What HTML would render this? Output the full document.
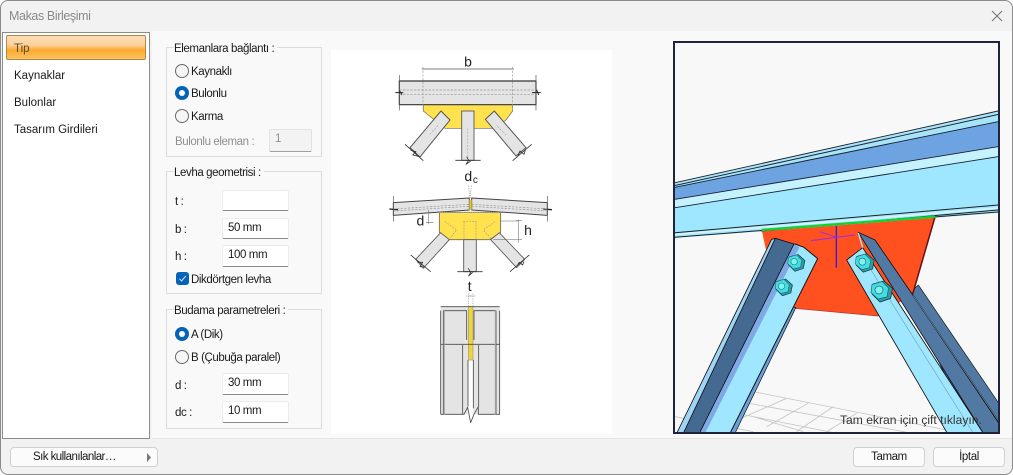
<!DOCTYPE html>
<html><head><meta charset="utf-8">
<style>
html,body{margin:0;padding:0;width:1013px;height:475px;overflow:hidden;background:#fff}
body{font-family:"Liberation Sans",sans-serif;font-size:11.5px;letter-spacing:-.4px;color:#1a1a1a;position:relative}
.a{position:absolute;white-space:nowrap}
.win{position:absolute;left:0;top:0;width:1011px;height:473px;border:1px solid #8a8a8a;border-radius:8px;background:#f2f2f2}
.panel{position:absolute;left:152px;top:31px;width:860px;height:407px;background:#f9f9f9;border-bottom:1px solid #e6e6e6}
.list{position:absolute;left:2px;top:32px;width:146px;height:405px;background:#fff;border:1px solid #8c8c8c}
.sel{position:absolute;left:6px;top:35px;width:138px;height:23px;border:1px solid #b08a45;border-radius:2px;background:linear-gradient(#fde0b8 0%,#fcd09a 40%,#fba92e 62%,#fcc465 100%)}
.g{position:absolute;border:1px solid #dcdcdc;box-sizing:border-box;left:166px;width:156px}
.lg{position:absolute;left:174px;background:#f9f9f9;padding-right:3px;line-height:14px;white-space:nowrap;margin-top:1px}
.r{position:absolute;left:175px;width:14px;height:14px;box-sizing:border-box;border:1px solid #6a6a6a;border-radius:50%;background:#f6f6f6}
.r.on{border:0;background:#0563b8}
.r.on:after{content:"";position:absolute;left:4px;top:4px;width:6px;height:6px;border-radius:50%;background:#fff}
.i{position:absolute;left:222px;width:67px;height:21px;background:#fff;border:1px solid #ececec;border-bottom:1px solid #8a8a8a;box-sizing:border-box;border-radius:2px;padding-left:5px;line-height:18px}
.b{position:absolute;top:447px;height:20px;box-sizing:border-box;background:#fbfbfb;border:1px solid #d0d0d0;border-radius:4px;text-align:center;line-height:19px}
.t{position:absolute;white-space:nowrap;line-height:14px;margin-top:1px}
.li{letter-spacing:0}
</style></head><body>
<div class="win"></div>
<div class="panel"></div>
<div class="a" style="left:9px;top:9px;font-size:12.5px;line-height:15px;color:#8a8a8a">Makas Birleşimi</div>
<svg class="a" style="left:990px;top:9px" width="14" height="14"><path d="M2 2L12 12M12 2L2 12" stroke="#777" stroke-width="1.1"/></svg>

<div class="list"></div><div class="sel"></div>
<div class="t li" style="left:14px;top:41px;color:#5a4a2a">Tip</div>
<div class="t li" style="left:14px;top:68px">Kaynaklar</div>
<div class="t li" style="left:14px;top:95px">Bulonlar</div>
<div class="t li" style="left:14px;top:122px">Tasarım Girdileri</div>

<div class="g" style="top:47px;height:110px"></div>
<div class="lg" style="top:41px">Elemanlara bağlantı :</div>
<div class="r" style="top:64px"></div><div class="t" style="left:191px;top:64px">Kaynaklı</div>
<div class="r on" style="top:86px"></div><div class="t" style="left:191px;top:86px">Bulonlu</div>
<div class="r" style="top:109px"></div><div class="t" style="left:191px;top:109px">Karma</div>
<div class="t" style="left:175px;top:134px;color:#8f8f8f">Bulonlu eleman :</div>
<div class="i" style="left:269px;top:129px;width:43px;height:23px;background:#f3f3f3;color:#8f8f8f;border-color:#e2e2e2;border-bottom-color:#a0a0a0">1</div>

<div class="g" style="top:171px;height:123px"></div>
<div class="lg" style="top:165px">Levha geometrisi :</div>
<div class="t" style="left:175px;top:194px">t :</div><div class="i" style="top:190px"></div>
<div class="t" style="left:175px;top:222px">b :</div><div class="i" style="top:218px">50 mm</div>
<div class="t" style="left:175px;top:249px">h :</div><div class="i" style="top:245px;height:22px">100 mm</div>
<div class="a" style="left:176px;top:272px;width:13px;height:13px;background:#0563b8;border-radius:3px"></div>
<svg class="a" style="left:176px;top:272px" width="13" height="13"><path d="M3.5 6.8L5.6 9L9.8 4" fill="none" stroke="#cfe3f5" stroke-width="1"/></svg>
<div class="t" style="left:191px;top:272px">Dikdörtgen levha</div>

<div class="g" style="top:309px;height:120px"></div>
<div class="lg" style="top:303px">Budama parametreleri :</div>
<div class="r on" style="top:327px"></div><div class="t" style="left:191px;top:327px">A (Dik)</div>
<div class="r" style="top:350px"></div><div class="t" style="left:191px;top:350px">B (Çubuğa paralel)</div>
<div class="t" style="left:175px;top:378px">d :</div><div class="i" style="top:373px;height:22px">30 mm</div>
<div class="t" style="left:175px;top:405px">dc :</div><div class="i" style="top:401px;height:22px">10 mm</div>

<div class="a" style="left:331px;top:50px;width:281px;height:384px;background:#fff"></div>

<svg class="a" style="left:0;top:0;letter-spacing:0" width="1013" height="475" viewBox="0 0 1013 475" font-family="'Liberation Sans',sans-serif">
<!-- drawing 1 -->
<g transform="translate(370,45) scale(.3333)" stroke-linejoin="round">
<path d="M160 178H428V198L408 225L372 250H225L160 198Z" fill="#ffe24d" stroke="#666" stroke-width="2"/>
<rect x="88" y="108" width="410" height="71" fill="#e4e4e4" stroke="#333" stroke-width="3.5"/>
<path d="M88 90V196M498 90V196M155 72H432" fill="none" stroke="#555" stroke-width="2"/>
<path d="M76 143H100M88 136L96 150M486 143H512M500 134L506 150" stroke="#222" stroke-width="3" fill="none"/>
<path d="M88 135H498M88 148H498M159 66V200M428 66V200" stroke="#999" stroke-width="2" stroke-dasharray="7 4" fill="none"/>
<path d="M213 198L240 225L150 336L120 308Z" fill="#e4e4e4" stroke="#555" stroke-width="3"/>
<path d="M373 198L346 223L438 333L468 308Z" fill="#e4e4e4" stroke="#555" stroke-width="3"/>
<rect x="275" y="198" width="37" height="148" fill="#e4e4e4" stroke="#666" stroke-width="3"/>
<path d="M105 298L160 347M485 298L428 347M256 346H332M122 316L138 320L128 330L145 334M444 332L450 318L462 328L466 316M290 335L296 346L288 358L302 348" fill="none" stroke="#333" stroke-width="2.5"/>
<path d="M180 268L205 240M408 270L378 240M293 250V340" stroke="#aaa" stroke-width="2" stroke-dasharray="6 4" fill="none"/>
<text x="294" y="65" font-size="42" text-anchor="middle" fill="#222">b</text>
</g>
<!-- drawing 2 -->
<g transform="translate(370,165) scale(.3333)" stroke-linejoin="round">
<path d="M208 142H392V202L360 224H238L208 202Z" fill="#ffe24d" stroke="#666" stroke-width="2.5"/>
<path d="M70 113L298 99V135L70 151Z" fill="#e4e4e4" stroke="#444" stroke-width="3"/>
<path d="M305 99L532 113V151L305 135Z" fill="#e4e4e4" stroke="#444" stroke-width="3"/>
<rect x="298" y="105" width="7" height="30" fill="#e8cc30"/>
<path d="M70 93V170M532 93V170" stroke="#555" stroke-width="2" fill="none"/>
<path d="M58 132L84 134M520 132L546 134" stroke="#222" stroke-width="4" fill="none"/>
<path d="M70 132L298 118M305 118L532 132M70 138L298 124M305 124L532 138" stroke="#999" stroke-width="2" stroke-dasharray="7 4" fill="none"/>
<path d="M208 142H392" stroke="#aaa" stroke-width="3" stroke-dasharray="4 3"/>
<path d="M280 170H320M282 170V224M318 170V224M225 170L260 195L240 220M375 170L340 195L362 220" fill="none" stroke="#999" stroke-width="2" stroke-dasharray="5 4"/>
<path d="M212 203L238 224L160 310L137 283Z" fill="#e4e4e4" stroke="#555" stroke-width="2.5"/>
<path d="M388 203L362 224L440 308L464 283Z" fill="#e4e4e4" stroke="#555" stroke-width="2.5"/>
<rect x="281" y="224" width="38" height="96" fill="#e4e4e4" stroke="#666" stroke-width="3"/>
<path d="M122 270L182 320M478 270L420 320M262 320H338M142 292L158 292L150 305L165 306M440 304L448 292L458 300L462 290M295 310L302 322L296 333L308 322" fill="none" stroke="#333" stroke-width="2.5"/>
<path d="M175 135V178M168 172H190M445 163V233M438 167H456M438 224H456M390 168H445M370 224H445" stroke="#666" stroke-width="1.6" fill="none"/>
<path d="M296 62L299 100M304 62L301 100" stroke="#999" stroke-width="2" stroke-dasharray="4 3" fill="none"/>
<text x="295" y="48" font-size="42" text-anchor="middle" fill="#222">d</text>
<text x="316" y="54" font-size="30" text-anchor="middle" fill="#222">c</text>
<text x="151" y="182" font-size="42" text-anchor="middle" fill="#222">d</text>
<text x="474" y="210" font-size="42" text-anchor="middle" fill="#222">h</text>
</g>
<!-- drawing 3 -->
<g transform="translate(420,280) scale(.3333)" stroke-linejoin="round">
<rect x="62" y="80" width="177" height="323" fill="#e4e4e4"/>
<rect x="143" y="240" width="17" height="190" fill="#fff"/>
<rect x="145" y="80" width="14" height="160" fill="#f2d535" stroke="#999" stroke-width="2"/>
<path d="M62 80H239M62 403H132L143 382L152 428L162 403L175 380V403H239M62 92V403M239 92V403M70 92V403M228 92V403M62 193H239M70 92H140V180M162 180V92H228M128 195V403M176 195V380M144 240V380M160 240V385" fill="none" stroke="#4a4a4a" stroke-width="2.5"/>
<path d="M73 92V403M226 92V403" stroke="#aaa" stroke-width="3" fill="none"/>
<path d="M138 48L156 48M148 48L166 48M145 40V80M159 40V80" stroke="#999" stroke-width="2" stroke-dasharray="4 3" fill="none"/>
<text x="149" y="33" font-size="42" text-anchor="middle" fill="#222">t</text>
</g>

<!-- 3D panel -->
<clipPath id="c"><rect x="675" y="43" width="323" height="389"/></clipPath>
<rect x="674" y="42" width="325" height="391" fill="#f8f8f8" stroke="#20233d" stroke-width="2"/>
<g clip-path="url(#c)">
<g transform="translate(670,220) scale(.3333)" fill="none" stroke="#c4c4c4" stroke-width="2.5">
<path d="M250 515L830 630M210 545L1000 690M150 570L600 660M15 590L250 635M350 535L225 590L130 635M415 550L290 620M490 560L380 635M560 580L470 635M250 590L400 635"/>
</g>
<g transform="translate(840,225) scale(.3333)" stroke-linejoin="round">
<path d="M235 180L480 540V625H400L200 210Z" fill="#5278a4" stroke="#111" stroke-width="2"/>
</g>
<path d="M761.7 230L935 217L912.7 294L878.3 316L794 308.3L766.7 253Z" fill="#ff5020"/>
<path d="M794 308.3L878.3 316" stroke="#a33" stroke-width=".7"/>
<path d="M935 217L912.7 294" stroke="#611" stroke-width="1.5"/>
<path d="M675 182.7L998 111V213L675 238Z" fill="#9fe6ff"/>
<path d="M675 182.7L998 111V121.7L675 187.3Z" fill="#a8e4f8"/>
<path d="M675 187.3L998 121.7V146.7L675 199.3Z" fill="#6da3e0"/>
<path d="M675 199.3L998 146.7V156.7L675 207.7Z" fill="#c5f2ff"/>
<path d="M675 182.7L998 111M675 185.5L998 114.5M675 187.3L998 121.7M675 199.3L998 146.7M675 207.7L998 156.7" stroke="#1a2030" stroke-width=".9" fill="none"/>
<path d="M675 232.7L998 205M675 237.3L998 212M761 231L998 210" stroke="#222" stroke-width="1" fill="none"/>
<path d="M675 234.5L998 208" stroke="#d6f4ff" stroke-width="1.8"/>
<path d="M761.7 230L935 216.7" stroke="#13d12f" stroke-width="2.4"/>
<g transform="translate(670,220) scale(.3333)" stroke-linejoin="round">
<path d="M499 18V143" stroke="#1a1aee" stroke-width="3.5"/>
<path d="M423 62L555 45M450 35L499 52" stroke="#9a2be8" stroke-width="3" fill="none"/>
<path d="M378 262L195 640H165L370 262Z" fill="#6aa0d8" stroke="#111" stroke-width="2"/>
<path d="M375 72L402 82L443 116L180 640H90Z" fill="#9fe6ff" stroke="#111" stroke-width="3"/>
<path d="M372 72L388 82L105 640H88Z" fill="#7ea8e6"/>
<path d="M305 58L318 55L45 640H20Z" fill="#9fd4f5" stroke="#111" stroke-width="2.5"/>
<path d="M316 55L372 72L88 640H40Z" fill="#456a92" stroke="#111" stroke-width="2.5"/>
</g>
<g transform="translate(840,225) scale(.3333)" stroke-linejoin="round">
<path d="M20 105L68 68L430 625H322Z" fill="#9fe6ff" stroke="#111" stroke-width="2.5"/>
<path d="M65 90L400 625" stroke="#6a94ac" stroke-width="1.6"/>
<path d="M55 22L105 45L215 205L480 600V625H430Z" fill="#5278a4" stroke="#111" stroke-width="2.5"/>
<path d="M55 24L68 68" stroke="#b0e4f8" stroke-width="4"/>
<path d="M220 212L480 595" stroke="#111" stroke-width="3.6"/>
<path d="M220 212L480 595" stroke="#9fe6ff" stroke-width="1.4"/>
</g>
<g stroke-linejoin="round">
<g transform="translate(796.5,262.5) scale(.4)"><path d="M-18 -14L4 -20L21 -5L17 15L-4 22L-20 6Z" fill="#2f9ba2" stroke="#134" stroke-width="1.6"/><path d="M-20 -13L0 -19L13 -6L10 12L-8 16L-22 3Z" fill="#45dde0" stroke="#1a6a70" stroke-width="1.4"/><circle cx="-6" cy="-2" r="8" fill="#7ff2f2" stroke="#1a6a70" stroke-width="1.4"/></g>
<g transform="translate(784,287) scale(.4)"><path d="M-18 -14L4 -20L21 -5L17 15L-4 22L-20 6Z" fill="#2f9ba2" stroke="#134" stroke-width="1.6"/><path d="M-20 -13L0 -19L13 -6L10 12L-8 16L-22 3Z" fill="#45dde0" stroke="#1a6a70" stroke-width="1.4"/><circle cx="-6" cy="-2" r="8" fill="#7ff2f2" stroke="#1a6a70" stroke-width="1.4"/></g>
<g transform="translate(865,262.5) scale(.44)"><path d="M-18 -14L4 -20L21 -5L17 15L-4 22L-20 6Z" fill="#2f9ba2" stroke="#134" stroke-width="1.6"/><path d="M-20 -13L0 -19L13 -6L10 12L-8 16L-22 3Z" fill="#45dde0" stroke="#1a6a70" stroke-width="1.4"/><circle cx="-6" cy="-2" r="8" fill="#7ff2f2" stroke="#1a6a70" stroke-width="1.4"/></g>
<g transform="translate(882,291) scale(.5)"><path d="M-18 -14L4 -20L21 -5L17 15L-4 22L-20 6Z" fill="#2f9ba2" stroke="#134" stroke-width="1.6"/><path d="M-20 -13L0 -19L13 -6L10 12L-8 16L-22 3Z" fill="#45dde0" stroke="#1a6a70" stroke-width="1.4"/><circle cx="-6" cy="-2" r="8" fill="#7ff2f2" stroke="#1a6a70" stroke-width="1.4"/></g>
</g>
</g>
<text x="840" y="424" font-size="12.1" fill="#333">Tam ekran için çift tıklayın.</text>
</svg>

<div class="b" style="left:10px;width:148px"><span style="position:absolute;left:22px;top:0;letter-spacing:-.55px">Sık kullanılanlar…</span>
<svg style="position:absolute;left:135px;top:5px" width="6" height="9"><path d="M1 0L5 4.5L1 9Z" fill="#777"/></svg></div>
<div class="b" style="left:853px;width:72px">Tamam</div>
<div class="b" style="left:933px;width:72px">İptal</div>
</body></html>
